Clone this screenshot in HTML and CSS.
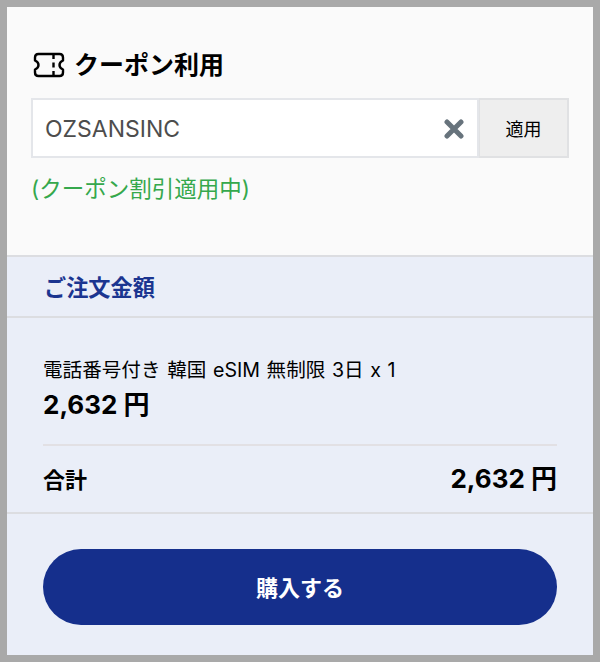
FILE: index.html
```html
<!DOCTYPE html>
<html lang="ja">
<head>
    <meta charset="UTF-8">
    <meta name="viewport" content="width=device-width, initial-scale=1.0">
    <title>ご注文金額</title>
    <link rel="stylesheet" href="styles.css">
</head>
<body>
    <div class="container">
        <section class="coupon">
            <h2 class="coupon-title">
                <svg class="ticket-icon" width="32" height="26" viewBox="0 0 32 26" fill="none" stroke="#000" stroke-width="2.4">
                    <path d="M5.500 2H26.500Q30 2 30 5.500V8.500Q26.500 10 26.500 13Q26.500 16 30 17.500V20.500Q30 24 26.500 24H5.500Q2 24 2 20.500V17.500Q5.500 16 5.500 13Q5.500 10 2 8.500V5.500Q2 2 5.500 2Z" stroke-linejoin="round"/>
                    <path d="M20.500 2V7M20.500 10.500V15.500M20.500 19V24"/>
                </svg>
                <span>クーポン利用</span>
            </h2>
            <div class="coupon-form">
                <div class="code-box">
                    <input type="text" class="code-input" value="OZSANSINC">
                    <button class="clear-button" aria-label="クリア">
                        <svg width="20" height="20" viewBox="0 0 20 20" stroke="#67737c" stroke-width="5" stroke-linecap="round">
                            <path d="M3 3L17 17M17 3L3 17"/>
                        </svg>
                    </button>
                </div>
                <button class="apply-button">適用</button>
            </div>
            <p class="coupon-message">(クーポン割引適用中)</p>
        </section>

        <h2 class="order-title">ご注文金額</h2>

        <section class="order">
            <div class="order-item">
                <p class="item-name">電話番号付き 韓国 eSIM 無制限 3日 x 1</p>
                <p class="price">2,632 円</p>
            </div>
            <div class="order-total">
                <span class="total-label">合計</span>
                <span class="price">2,632 円</span>
            </div>
        </section>

        <div class="purchase">
            <button class="purchase-button">購入する</button>
        </div>
    </div>
</body>
</html>
```
FILE: styles.css
```css
* {
    box-sizing: border-box;
}

body {
    font-family: Inter, 'Noto Sans CJK JP', sans-serif;
    background-color: #a9a9a9;
    color: #000;
    margin: 0;
    padding: 7px;
    height: 662px;
}

h2, p {
    margin: 0;
}

button, input {
    font-family: inherit;
    border: none;
    border-radius: 0;
    margin: 0;
    padding: 0;
}

.container {
    background-color: #eaeef8;
    height: 648px;
}

.coupon {
    background-color: #fafafa;
    height: 248px;
    padding: 40px 24px 0;
}

.coupon-title {
    display: flex;
    align-items: center;
    gap: 9px;
    height: 36px;
    padding-left: 2px;
    font-size: 25px;
    font-weight: 600;
    line-height: 36px;
}

.coupon-form {
    display: flex;
    height: 60px;
    margin-top: 15px;
}

.code-box {
    display: flex;
    align-items: center;
    width: 448px;
    padding: 1px 13px 0 12px;
    background-color: #fff;
    border: 2px solid #e4e6ea;
}

.code-input {
    flex: 1;
    min-width: 0;
    height: 100%;
    padding-top: 1px;
    background: none;
    color: #4d4d4d;
    font-size: 23px;
    outline: none;
}

.clear-button {
    display: flex;
    background: none;
}

.apply-button {
    width: 90px;
    background-color: #eee;
    border: 2px solid #e0e1e3;
    border-left-width: 1px;
    color: #000;
    font-size: 18px;
}

.coupon-message {
    margin-top: 14px;
    color: #35a84c;
    font-size: 22.5px;
    line-height: 34px;
}

.order-title {
    height: 63px;
    padding-left: 37px;
    border-top: 2px solid #dcdde1;
    border-bottom: 2px solid #dcdde1;
    color: #1b3590;
    font-size: 22.2px;
    font-weight: 600;
    line-height: 61px;
}

.order {
    height: 196px;
    padding: 36px 36px 0;
    border-bottom: 2px solid #dcdde1;
}

.order-item {
    height: 92px;
    border-bottom: 2px solid #e2e0e4;
}

.item-name {
    font-size: 19.6px;
    line-height: 32px;
    word-spacing: 1.1px;
}

.price {
    font-size: 26px;
    font-weight: 700;
    line-height: 38px;
}

.order-total {
    display: flex;
    justify-content: space-between;
    align-items: center;
    height: 66px;
}

.total-label {
    padding-bottom: 3px;
    font-size: 22px;
    font-weight: 600;
}

.purchase {
    padding: 35px 36px 0;
}

.purchase-button {
    width: 100%;
    height: 76px;
    padding-bottom: 2px;
    border-radius: 38px;
    background-color: #152f8c;
    color: #fff;
    font-size: 22px;
    font-weight: 600;
}
```
